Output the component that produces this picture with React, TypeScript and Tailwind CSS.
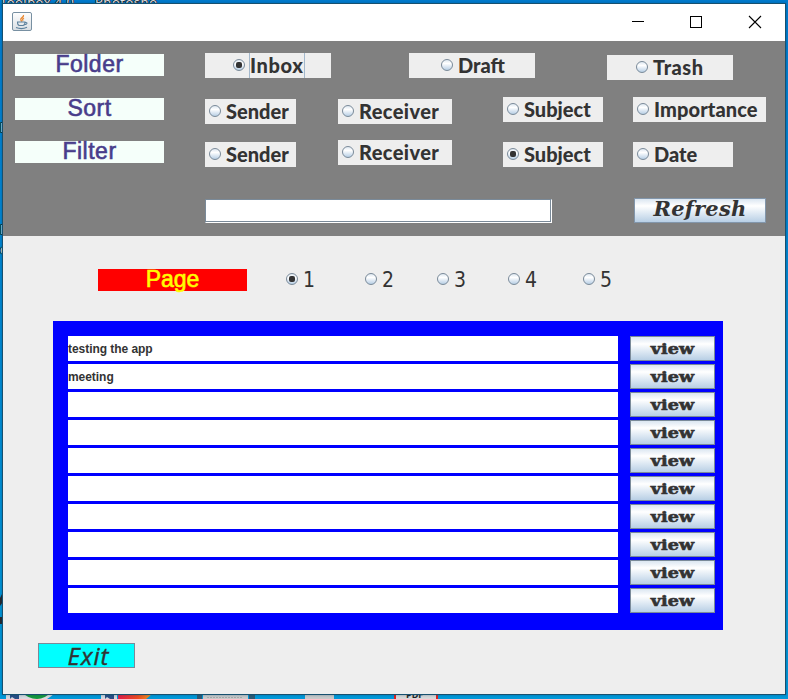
import { clsx } from "clsx";

const futura = "font-['Lato',sans-serif] font-black text-[20px]";

function Dot({ on }: { on?: boolean }) {
  return (
    <span className="flex h-3 w-3 shrink-0 items-center justify-center rounded-full border border-[#7a8a99] bg-linear-to-b from-[#dfe8f1] via-white via-35% to-[#b8cfe5]">
      {on && <span className="h-1.5 w-1.5 rounded-[2px] bg-[#333333]" />}
    </span>
  );
}

function Radio({ label, box, text, on, focus }: { label: string; box: string; text: string; on?: boolean; focus?: boolean }) {
  return (
    <div className={clsx("flex h-[25px] shrink-0 items-center bg-[#eeeeee] pb-px", box)}>
      <Dot on={on} />
      <span
        className={clsx(
          "-mb-px flex h-[25px] items-center whitespace-nowrap pb-0.5 text-[#333333]",
          focus ? "ml-1 w-14 border-x border-[#a3b8cc]" : "ml-[5px]",
          futura,
          text,
        )}
      >
        {label}
      </span>
    </div>
  );
}

function Heading({ children, className }: { children: string; className: string }) {
  return (
    <div className={clsx("flex h-[22px] w-[149px] shrink-0 items-center justify-center font-['Liberation_Sans',Arial,sans-serif] text-[23px] leading-none", className)}>
      <span className="-mt-0.5">{children}</span>
    </div>
  );
}

const violet = "mt-px bg-[#f5fffa] tracking-[0.5px] text-[#483d8b] [-webkit-text-stroke:0.6px_#483d8b]";

function Desktop() {
  return (
    <div className="absolute inset-0 overflow-hidden bg-linear-to-b from-[#007ccf] to-[#0099da]">
      <svg width="788" height="699" className="block">
        <g fill="#e4e4e4" stroke="#17202a" strokeWidth="1.6" paintOrder="stroke" fontFamily="Noto Sans, sans-serif" fontSize="13">
          <text x="0" y="7" textLength="74">Toolbox 4.0</text>
          <text x="95" y="7" textLength="62">Photosho</text>
          <text x="0" y="132">E</text>
          <text x="0" y="234">E</text>
          <text x="0" y="254">c</text>
        </g>
        <path d="M0 598l3-6v10l-3 4zM0 617h3v7H0z" fill="#26262b" />
        <path d="M6 692h16v7H6zM101 692h16v7h-16z" fill="#d5d9df" />
        <path d="M10 692h9v7h-4l-3-2-2 2zM105 692h9v7h-4l-3-2-2 2z" fill="#294e85" />
        <path d="M22 692h34q-4 4-9 7H22z" fill="#d9dce0" />
        <path d="M22 692h29q-6 7-14 7-9 0-15-7z" fill="#16993b" />
        <defs>
          <linearGradient id="fox"><stop stopColor="#e21c49" /><stop offset=".55" stopColor="#ee4b20" /><stop offset="1" stopColor="#f5a51d" /></linearGradient>
        </defs>
        <path d="M118 692h36q-4 4-8 7h-28z" fill="url(#fox)" />
        <path d="M197 692h5v7h-5zM249 692h6v7h-6z" fill="#2d5a74" />
        <path d="M203 692h45v7h-45zM305 692h29v7h-29z" fill="#c9caca" />
        <path d="M207 697.5h35" stroke="#aaa" strokeDasharray="2 1" />
        <path d="M394 692h44v7h-44z" fill="#e02020" />
        <path d="M396 692h40v7h-40z" fill="#d9d9d9" />
        <text x="406" y="697.5" fill="#222" fontFamily="Open Sans, sans-serif" fontWeight="700" fontSize="9">PDF</text>
      </svg>
    </div>
  );
}

function TitleBar() {
  return (
    <div className="flex h-[37px] shrink-0 items-start justify-between bg-white">
      <svg width="20" height="20" viewBox="0 0 20 20" className="ml-[9px] mt-2">
        <defs>
          <linearGradient id="tile" x2="0" y2="1"><stop stopColor="#fff" /><stop offset="1" stopColor="#d8dde2" /></linearGradient>
        </defs>
        <rect x=".5" y=".5" width="19" height="18" rx="1.5" fill="url(#tile)" stroke="#7890a2" />
        <path d="M11.5 3c.8 2.2-3.5 3-2.7 4.8.3.8 1 1.1.9 2M12 6c-2 1-1.4 2-.8 2.7" fill="none" stroke="#e8862e" strokeWidth="1.3" />
        <path d="M5.5 10h7.5c0 1.5-.8 3.5-2 3.5H7.5c-1.2 0-2-2-2-3.5zm7.5.5c3-.5 2.5 2.3-.8 2.3M4 15.5c3 1.2 8 1.2 11-.2" fill="none" stroke="#5d819d" strokeWidth="1.1" />
      </svg>
      <svg width="154" height="37" className="block" fill="none" stroke="#000" shapeRendering="crispEdges">
        <path d="M1 17.5h12" />
        <rect x="59.5" y="12.5" width="11" height="11" />
        <path d="M118 12l12 12M130 12l-12 12" shapeRendering="auto" strokeWidth="1.1" />
      </svg>
    </div>
  );
}

const metal = "bg-linear-to-b from-[#dbe6f1] via-white via-30% to-[#b8cfe5]";

const messages = ["testing the app", "meeting", "", "", "", "", "", "", "", ""];

export default function App() {
  return (
    <div className="relative h-[699px] w-[788px] overflow-hidden">
      <Desktop />
      <div className="absolute left-[2px] top-[3px] flex h-[692px] w-[784px] flex-col border border-[#17506f] bg-[#eeeeee] shadow-[0_0_3px_#003c6666]">
        <TitleBar />
        <div className="h-[195px] shrink-0 bg-[#808080] pl-3 pt-3">
          <div className="flex h-11 items-start">
            <Heading className={violet}>Folder</Heading>
            <Radio label="Inbox" box="ml-[41px] w-[126px] pl-7" text="tracking-[0.6px]" on focus />
            <Radio label="Draft" box="ml-[78px] w-[126px] pl-8" text="tracking-[0px]" />
            <Radio label="Trash" box="ml-[72px] mt-0.5 w-[126px] pl-[29px]" text="tracking-[0.5px]" />
          </div>
          <div className="flex h-[43px] items-start">
            <Heading className={violet}>Sort</Heading>
            <Radio label="Sender" box="ml-[41px] mt-0.5 w-[91px] pl-1" text="tracking-[0px]" />
            <Radio label="Receiver" box="ml-[42px] mt-0.5 w-[114px] pl-1" text="tracking-[0.4px]" />
            <Radio label="Subject" box="ml-[51px] w-[100px] pl-1" text="tracking-[0px]" />
            <Radio label="Importance" box="ml-[30px] w-[133px] pl-1" text="tracking-[0.1px]" />
          </div>
          <div className="flex h-[58px] items-start">
            <Heading className={violet}>Filter</Heading>
            <Radio label="Sender" box="ml-[41px] mt-0.5 w-[91px] pl-1" text="tracking-[0px]" />
            <Radio label="Receiver" box="ml-[42px] w-[114px] pl-1" text="tracking-[0.4px]" />
            <Radio label="Subject" box="ml-[51px] mt-0.5 w-[100px] pl-1" text="tracking-[0px]" on />
            <Radio label="Date" box="ml-[30px] mt-0.5 w-[100px] pl-1" text="tracking-[0px]" />
          </div>
          <div className="flex items-start">
            <input aria-label="Search" className="ml-[190px] mt-px h-6 w-[347px] border border-[#7a8a99] border-b-white border-r-white bg-white px-1 shadow-[inset_-1px_-1px_#7a8a99] outline-none" />
            <button className={clsx("ml-[82px] flex h-[25px] w-[132px] items-center justify-center border border-[#8296ab] font-['DejaVu_Serif',serif] text-[21px] font-bold italic leading-none text-[#333333]", metal)}>
              <span className="-mt-[5px] tracking-[0.2px]">Refresh</span>
            </button>
          </div>
        </div>

        <div className="flex h-[85px] shrink-0 items-start pl-[95px] pt-[33px]">
          <Heading className="bg-[#ff0000] tracking-[-0.1px] text-[#ffff00] [-webkit-text-stroke:0.6px_#ffff00]">Page</Heading>
          <div className="ml-[39px] flex h-5 items-center font-['DejaVu_Sans_Condensed','DejaVu_Sans',sans-serif] text-[21px] leading-none text-[#333333]">
            <div className="flex w-[79px] items-center gap-[5px]"><Dot on /><span className="mt-0.5">1</span></div>
            <div className="flex w-[72px] items-center gap-[5px]"><Dot /><span className="mt-0.5">2</span></div>
            <div className="flex w-[71px] items-center gap-[5px]"><Dot /><span className="mt-0.5">3</span></div>
            <div className="flex w-[75px] items-center gap-[5px]"><Dot /><span className="mt-0.5">4</span></div>
            <div className="flex items-center gap-[5px]"><Dot /><span className="mt-0.5">5</span></div>
          </div>
        </div>

        <div className="ml-[50px] flex h-[309px] w-[670px] shrink-0 flex-col gap-[3px] bg-[#0000ff] pl-[15px] pt-[15px]">
          {messages.map((message, i) => (
            <div key={i} className="flex h-[25px] shrink-0 gap-3">
              <div className="flex w-[550px] items-center bg-white font-['Liberation_Sans',sans-serif] text-[12px] font-bold tracking-[-0.05px] text-[#333333]">{message}</div>
              <button className={clsx("flex w-[85px] items-center justify-center border border-[#7a8a99] font-['DejaVu_Serif',serif] text-[15px] font-bold leading-none text-[#333333] [-webkit-text-stroke:0.6px_#333333]", metal)}>
                <span className="mt-0.5 scale-x-[1.17] scale-y-[0.95]">view</span>
              </button>
            </div>
          ))}
        </div>

        <button className="ml-[35px] mt-[13px] flex h-[25px] w-[97px] shrink-0 items-center justify-center border border-[#7a8a99] bg-[#00ffff] pl-1 font-['Open_Sans',sans-serif] text-[24px] font-medium italic leading-none tracking-[1px] text-[#333333] [-webkit-text-stroke:0.4px_#333333]">
          Exit
        </button>
      </div>
    </div>
  );
}
